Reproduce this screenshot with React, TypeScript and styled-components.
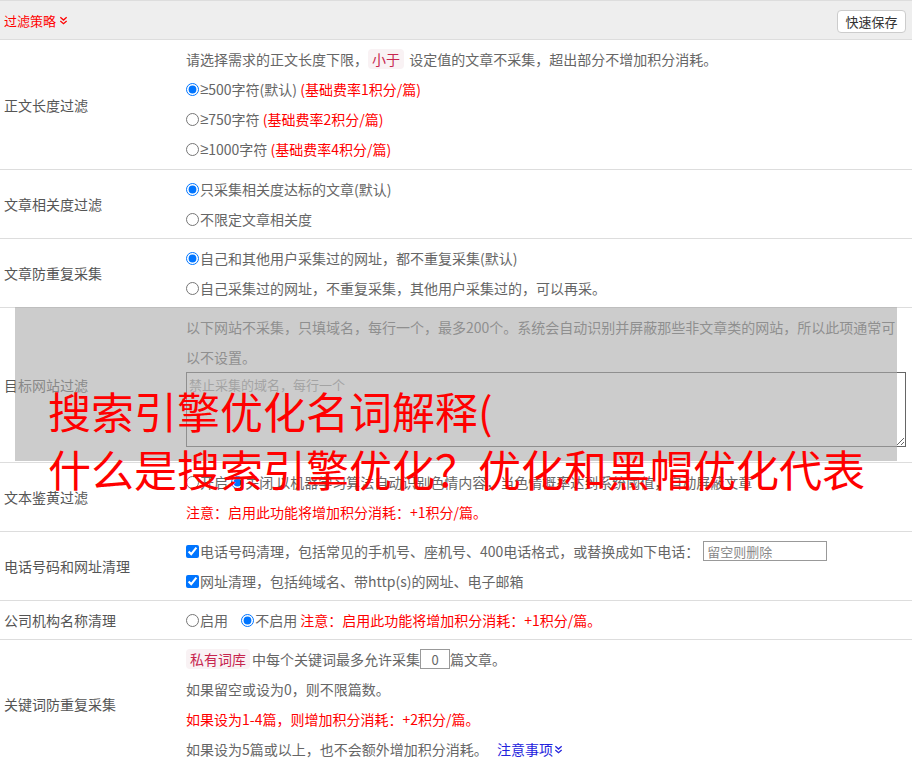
import React from 'react'
import styled, { createGlobalStyle } from 'styled-components'

const GlobalStyle = createGlobalStyle`
  html, body {
    margin: 0;
    padding: 0;
    background: #fff;
  }
  body {
    font-family: "Noto Sans CJK SC", "Liberation Sans", sans-serif;
    font-size: 14px;
    color: #666;
  }
`

const DoubleChevron = ({ color }: { color: string }) => (
  <svg width='9' height='9' viewBox='0 0 10 10' fill='none' stroke={color} strokeWidth='1.4'>
    <polyline points='1.5,1.5 5,4.5 8.5,1.5' />
    <polyline points='1.5,5.5 5,8.5 8.5,5.5' />
  </svg>
)

const App = () => {
  return (
    <Page>
      <GlobalStyle />
      <Header>
        <HeaderTitle>
          过滤策略 <DoubleChevron color='#f00' />
        </HeaderTitle>
        <SaveButton>快速保存</SaveButton>
      </Header>

      <Row>
        <Label>正文长度过滤</Label>
        <Content>
          <Line>
            请选择需求的正文长度下限，<Code>小于</Code> 设定值的文章不采集，超出部分不增加积分消耗。
          </Line>
          <Line>
            <Radio name='len' defaultChecked />
            <Sym>≥</Sym>500字符(默认) <Red>(基础费率1积分/篇)</Red>
          </Line>
          <Line>
            <Radio name='len' />
            <Sym>≥</Sym>750字符 <Red>(基础费率2积分/篇)</Red>
          </Line>
          <Line>
            <Radio name='len' />
            <Sym>≥</Sym>1000字符 <Red>(基础费率4积分/篇)</Red>
          </Line>
        </Content>
      </Row>

      <Row>
        <Label>文章相关度过滤</Label>
        <Content>
          <Line>
            <Radio name='rel' defaultChecked />只采集相关度达标的文章(默认)
          </Line>
          <Line>
            <Radio name='rel' />不限定文章相关度
          </Line>
        </Content>
      </Row>

      <Row>
        <Label>文章防重复采集</Label>
        <Content>
          <Line>
            <Radio name='dup' defaultChecked />自己和其他用户采集过的网址，都不重复采集(默认)
          </Line>
          <Line>
            <Radio name='dup' />自己采集过的网址，不重复采集，其他用户采集过的，可以再采。
          </Line>
        </Content>
      </Row>

      <Row>
        <Label>目标网站过滤</Label>
        <Content>
          <Line>
            以下网站不采集，只填域名，每行一个，最多200个。系统会自动识别并屏蔽那些非文章类的网站，所以此项通常可以不设置。
          </Line>
          <DomainArea placeholder='禁止采集的域名，每行一个' />
        </Content>
      </Row>

      <Row>
        <Label>文本鉴黄过滤</Label>
        <Content>
          <Line>
            <Radio name='porn' />开启 <Radio name='porn' defaultChecked />
            关闭 以机器学习算法自动识别色情内容，当色情概率达到系统阈值，自动屏蔽文章
          </Line>
          <Line>
            <Red>注意：启用此功能将增加积分消耗：+1积分/篇。</Red>
          </Line>
        </Content>
      </Row>

      <Row>
        <Label>电话号码和网址清理</Label>
        <Content>
          <Line>
            <Check defaultChecked />电话号码清理，包括常见的手机号、座机号、400电话格式，或替换成如下电话：
            <PhoneInput placeholder='留空则删除' />
          </Line>
          <Line>
            <Check defaultChecked />网址清理，包括纯域名、带http(s)的网址、电子邮箱
          </Line>
        </Content>
      </Row>

      <Row>
        <Label>公司机构名称清理</Label>
        <Content>
          <Line>
            <Radio name='org' />启用 <Spacer />
            <Radio name='org' defaultChecked />不启用 <Red>注意：启用此功能将增加积分消耗：+1积分/篇。</Red>
          </Line>
        </Content>
      </Row>

      <Row>
        <Label>关键词防重复采集</Label>
        <Content>
          <Line>
            <Code>私有词库</Code>中每个关键词最多允许采集<CountInput defaultValue='0' />篇文章。
          </Line>
          <Line>如果留空或设为0，则不限篇数。</Line>
          <Line>
            <Red>如果设为1-4篇，则增加积分消耗：+2积分/篇。</Red>
          </Line>
          <Line>
            如果设为5篇或以上，也不会额外增加积分消耗。 <NoticeLink>注意事项<DoubleChevron color='#22d' /></NoticeLink>
          </Line>
        </Content>
      </Row>

      <Shade />
      <Headline>
        搜索引擎优化名词解释(
        <br />
        什么是搜索引擎优化？优化和黑帽优化代表
      </Headline>
    </Page>
  )
}

const Page = styled.div`
  position: relative;
  width: 912px;
  height: 768px;
  overflow: hidden;
`

const Header = styled.div`
  height: 38px;
  border-top: 1px solid #ddd;
  border-bottom: 1px solid #ddd;
  background: #eee;
  display: flex;
  align-items: center;
  justify-content: space-between;
  padding: 0 6px 0 4px;
`

const HeaderTitle = styled.div`
  color: #f00;
  font-size: 13px;
  display: flex;
  align-items: center;
  gap: 3px;
`

const SaveButton = styled.button`
  font-family: inherit;
  font-size: 13px;
  color: #333;
  background: #fff;
  border: 1px solid #ccc;
  border-radius: 4px;
  height: 23px;
  width: 69px;
  padding: 0;
  margin-top: 3px;
  cursor: pointer;
`

const Row = styled.div`
  display: grid;
  grid-template-columns: 186px 1fr;
  border-bottom: 1px solid #ddd;
  &:nth-of-type(2) > div:last-child {
    padding-bottom: 5px;
  }
`

const Label = styled.div`
  display: flex;
  align-items: center;
  padding-left: 4px;
  color: #555;
  font-size: 14px;
`

const Content = styled.div`
  padding: 4px 12px 4px 0;
`

const Line = styled.div`
  height: 30px;
  line-height: 30px;
  display: flex;
  align-items: center;
  flex-wrap: wrap;
  white-space: pre-wrap;
  color: #666;
  font-size: 14px;
  &:has(+ textarea) {
    height: 60px;
  }
`

const Sym = styled.span`
  font-family: "Liberation Sans", sans-serif;
  font-size: 15px;
`

const Red = styled.span`
  color: #f00;
`

const Code = styled.span`
  background: #f9f2f4;
  color: #c7254e;
  border-radius: 4px;
  padding: 0 4px;
  line-height: 20px;
  margin-right: 2px;
`

const Radio = styled.input.attrs({ type: 'radio' })`
  width: 13px;
  height: 13px;
  margin: 0 1px 0 0;
`

const Check = styled.input.attrs({ type: 'checkbox' })`
  width: 13px;
  height: 13px;
  margin: 0 1px 0 0;
`

const Spacer = styled.span`
  width: 10px;
`

const DomainArea = styled.textarea`
  display: block;
  box-sizing: border-box;
  width: 720px;
  height: 75px;
  margin-bottom: 11px;
  border: 1px solid #666;
  padding: 2px;
  font-family: inherit;
  font-size: 13px;
  resize: vertical;
  &::placeholder {
    color: #999;
  }
`

const PhoneInput = styled.input`
  box-sizing: border-box;
  width: 124px;
  height: 20px;
  border: 1px solid #999;
  padding: 0 3px;
  font-family: inherit;
  font-size: 13px;
  margin-left: 4px;
  &::placeholder {
    color: #888;
  }
`

const CountInput = styled.input`
  box-sizing: border-box;
  width: 30px;
  height: 20px;
  border: 1px solid #999;
  text-align: center;
  font-family: inherit;
  font-size: 13px;
  color: #666;
  padding: 0;
`

const NoticeLink = styled.a`
  color: #22d;
  margin-left: 6px;
  display: inline-flex;
  align-items: center;
  gap: 1px;
  cursor: pointer;
`

const Shade = styled.div`
  position: absolute;
  left: 15px;
  top: 307px;
  width: 882px;
  height: 154px;
  background: rgba(170, 170, 170, 0.6);
  pointer-events: none;
`

const Headline = styled.div`
  position: absolute;
  left: 48px;
  top: 381px;
  color: #f00;
  font-size: 43px;
  line-height: 58px;
  white-space: nowrap;
  pointer-events: none;
`

export default App
